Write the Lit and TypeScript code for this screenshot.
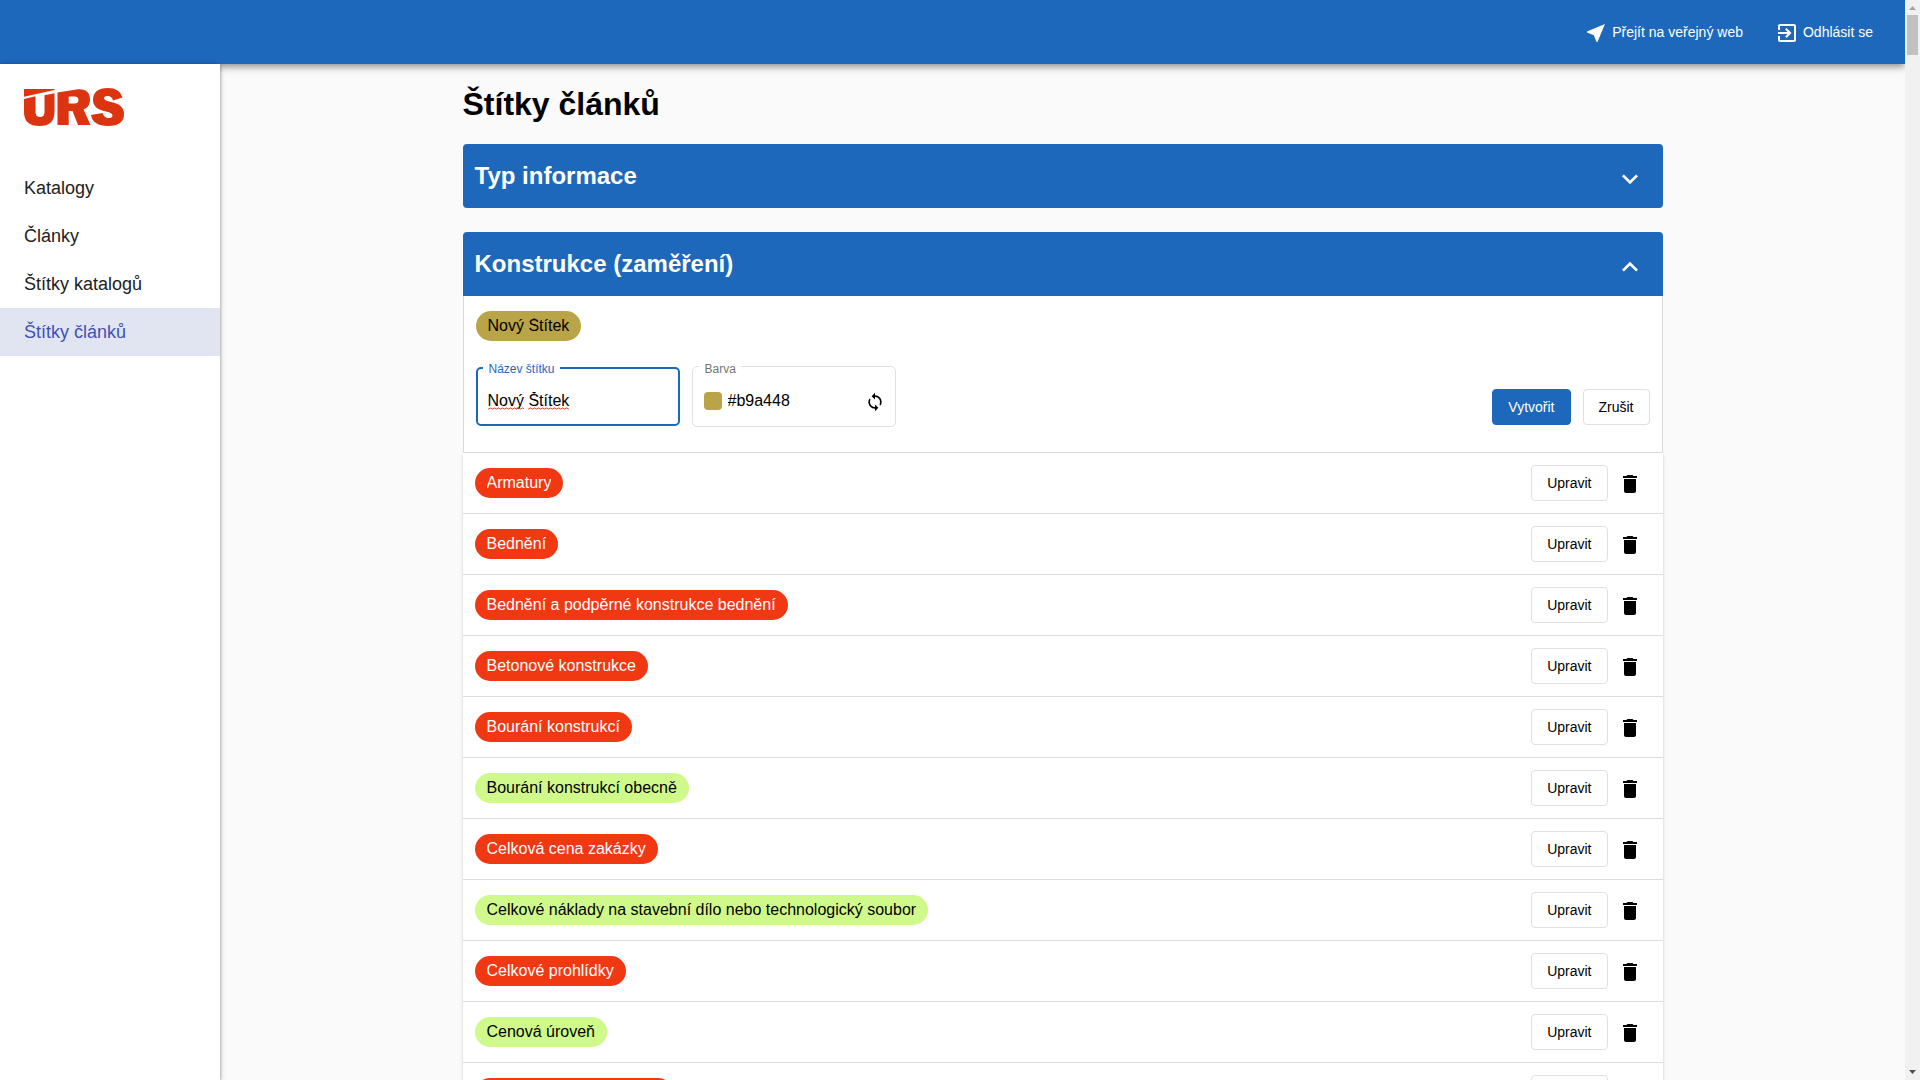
import { LitElement, html, css, svg } from "lit";
import { customElement, property, state } from "lit/decorators.js";
import { classMap } from "lit/directives/class-map.js";
import { styleMap } from "lit/directives/style-map.js";

const ICONS = {
  nearMe: "M21 3L3 10.53v.98l6.84 2.65L12.48 21h.98L21 3z",
  exit: "M10.09 15.59L11.5 17l5-5-5-5-1.41 1.41L12.67 11H3v2h9.67l-2.58 2.59zM19 3H5c-1.11 0-2 .9-2 2v4h2V5h14v14H5v-4H3v4c0 1.1.89 2 2 2h14c1.1 0 2-.9 2-2V5c0-1.1-.9-2-2-2z",
  more: "M16.59 8.59L12 13.17 7.41 8.59 6 10l6 6 6-6z",
  less: "M12 8l-6 6 1.41 1.41L12 10.83l4.59 4.58L18 14z",
  trash: "M6 19c0 1.1.9 2 2 2h8c1.1 0 2-.9 2-2V7H6v12zM19 4h-3.500l-1-1h-5l-1 1H5v2h14V4z",
  sync: "M12 4V1L8 5l4 4V6c3.310 0 6 2.690 6 6 0 1.010-.250 1.970-.700 2.800l1.460 1.460C19.540 15.030 20 13.570 20 12c0-4.420-3.580-8-8-8zm0 14c-3.310 0-6-2.690-6-6 0-1.010.250-1.970.700-2.800L5.240 7.740C4.460 8.970 4 10.430 4 12c0 4.420 3.580 8 8 8v3l4-4-4-4v3z",
};

const icon = (path: string) => svg`<svg class="icon" viewBox="0 0 24 24" aria-hidden="true"><path d=${path}></path></svg>`;

const RED = "#f03813";
const GREEN = "#cffa8b";

interface Tag {
  name: string;
  color: string;
}

const TAGS: Tag[] = [
  { name: "Armatury", color: RED },
  { name: "Bednění", color: RED },
  { name: "Bednění a podpěrné konstrukce bednění", color: RED },
  { name: "Betonové konstrukce", color: RED },
  { name: "Bourání konstrukcí", color: RED },
  { name: "Bourání konstrukcí obecně", color: GREEN },
  { name: "Celková cena zakázky", color: RED },
  { name: "Celkové náklady na stavební dílo nebo technologický soubor", color: GREEN },
  { name: "Celkové prohlídky", color: RED },
  { name: "Cenová úroveň", color: GREEN },
  { name: "Dokončovací konstrukce", color: RED },
];

@customElement("tag-chip")
class TagChip extends LitElement {
  @property() name = "";
  @property() color = RED;

  static styles = css`
    :host { display: inline-flex; min-width: 0; }
    .chip {
      height: 30px;
      padding: 7px 12px 5px;
      border-radius: 15px;
      box-sizing: border-box;
      color: #000;
    }
    .light { color: #fff; }
    .text {
      display: block;
      padding-bottom: 2px;
      font-size: 16px;
      line-height: 16px;
      overflow: hidden;
      white-space: nowrap;
    }
  `;

  render() {
    return html`<span
      class=${classMap({ chip: true, light: this.color === RED })}
      style=${styleMap({ backgroundColor: this.color })}
      ><span class="text">${this.name}</span></span>`;
  }
}

@customElement("app-root")
class AppRoot extends LitElement {
  @state() draftName = "Nový Štítek";
  @state() draftColor = "#b9a448";

  static styles = css`
    :host {
      display: grid;
      grid-template-columns: minmax(0, 1fr) 15px;
      height: 100vh;
      overflow: hidden;
      font-family: "Liberation Sans", Arial, sans-serif;
      color: #000;
      background: #fafafa;
    }
    .app { display: flex; flex-direction: column; min-height: 0; overflow: hidden; }
    .icon { display: block; width: 24px; height: 24px; fill: currentColor; flex: none; }
    button, input { font-family: inherit; margin: 0; }

    .topbar {
      display: flex;
      align-items: center;
      justify-content: flex-end;
      gap: 32px;
      flex: none;
      height: 64px;
      padding: 0 32px;
      box-sizing: border-box;
      background: #1e68bb;
      box-shadow: 0 2px 8px rgba(0, 0, 0, 0.5);
      z-index: 1;
    }
    .toplink {
      display: flex;
      align-items: center;
      gap: 4px;
      padding-top: 2px;
      color: #fff;
      font-size: 14px;
      line-height: 20px;
      text-decoration: none;
    }
    .toplink span { padding-bottom: 2px; }

    .body { display: flex; flex: 1; min-height: 0; }
    .sidebar {
      width: 220px;
      flex: none;
      background: #fff;
      box-shadow: 0 1px 4px rgba(0, 0, 0, 0.5);
      z-index: 2;
    }
    .logo { display: block; width: 100px; height: 38px; margin: 24px 24px 38px; }
    .nav { display: flex; flex-direction: column; }
    .navlink {
      padding: 0 24px;
      font-size: 18px;
      line-height: 48px;
      color: #212121;
      text-decoration: none;
    }
    .navlink.active { color: #3f51b5; background: #e1e5f2; }

    .main { flex: 1; min-width: 0; overflow: hidden; }
    .content { max-width: 1200px; margin: 0 auto; }
    .title { margin: 0; padding: 20px 0; font-size: 32px; line-height: 40px; font-weight: 700; }

    .panel { margin-bottom: 24px; }
    .panelhead {
      display: flex;
      align-items: center;
      justify-content: space-between;
      width: 100%;
      height: 64px;
      padding: 0 17px 0 12px;
      border: 0;
      border-radius: 4px;
      background: #1e68bb;
      color: #fff;
      font-size: 24px;
      font-weight: 700;
      text-align: left;
    }
    .open .panelhead { border-radius: 4px 4px 0 0; }
    .panelhead .icon { width: 32px; height: 32px; margin-top: 6px; }
    .heading { margin: 0; font-size: inherit; }

    .form { padding: 14px 12px 25px; border: 1px solid #d9d9d9; border-top: 0; background: #fff; }
    .formrow { display: flex; align-items: flex-start; gap: 12px; padding-top: 25px; }
    .preview { display: flex; padding-top: 1px; }
    .field {
      position: relative;
      display: flex;
      align-items: center;
      width: 204px;
      height: 61px;
      padding: 8px 10px 0 11px;
      box-sizing: border-box;
      border: 1px solid #e0e0e0;
      border-radius: 5px;
    }
    .field.focused { height: 59px; margin-top: 1px; padding: 9px 10px 0; border: 2px solid #1e68bb; }
    .label {
      position: absolute;
      top: -6px;
      left: 6px;
      padding: 0 5px 0 6px;
      background: #fff;
      color: #757575;
      font-size: 12px;
      line-height: 16px;
    }
    .focused .label { top: -8px; left: 5px; color: #1e68bb; }
    .input {
      flex: 1;
      min-width: 0;
      width: 0;
      height: 18px;
      padding: 0;
      border: 0;
      outline: 0;
      background: transparent;
      color: #000;
      font-size: 16px;
    }
    .squiggle { position: absolute; left: 10px; top: 38px; width: 82px; height: 3px; }
    .swatch { width: 18px; height: 18px; margin-right: 6px; border-radius: 4px; flex: none; }
    .iconbtn { display: flex; padding: 0; border: 0; background: transparent; color: #000; }
    .field .iconbtn { padding-top: 2px; }
    .field .icon { width: 20px; height: 20px; }

    .spacer { flex: 1; }
    .actions { display: flex; gap: 12px; padding-top: 23px; }
    .btn {
      height: 36px;
      padding: 0 15px;
      border: 1px solid #e0e0e0;
      border-radius: 4px;
      background: #fff;
      color: #000;
      font-size: 14px;
    }
    .btn.primary { border-color: #1e68bb; background: #1e68bb; color: #fff; }

    .list { margin: 0; padding: 0; list-style: none; background: #fff; box-shadow: 0 2px 3px rgba(0, 0, 0, 0.2); }
    .row {
      display: flex;
      align-items: center;
      justify-content: space-between;
      height: 60px;
      padding: 0 21px 0 12px;
      border-bottom: 1px solid #dddddd;
    }
    .tools { display: flex; align-items: center; gap: 10px; }
    .tools .iconbtn { padding-top: 2px; }

    .scrollbar { display: flex; flex-direction: column; align-items: center; background: #f1f1f1; }
    .arrow { display: block; width: 15px; height: 15px; flex: none; }
    .thumb { width: 11px; height: 40px; background: #c1c1c1; }
    .track { flex: 1; }
  `;

  private topbar() {
    return html`<header class="topbar">
      <a class="toplink" href="#web">${icon(ICONS.nearMe)}<span>Přejít na veřejný web</span></a>
      <a class="toplink" href="#logout">${icon(ICONS.exit)}<span>Odhlásit se</span></a>
    </header>`;
  }

  private sidebar() {
    const items = ["Katalogy", "Články", "Štítky katalogů", "Štítky článků"];
    return html`<aside class="sidebar">
      <svg class="logo" viewBox="0 0 100 38" role="img" aria-label="ÚRS">
        <g fill="#dc3410">
          <path d="M0 1H30.500V2L0 8.700Z"></path>
          <path d="M0 11L11.500 8.200V24Q11.500 29 16 29Q20.500 29 20.500 24V7.200L30.500 5.300V24Q30.500 38 15.500 38Q0 38 0 24Z"></path>
          <path fill-rule="evenodd" d="M33.500 4.500L54 1.300Q66 0.500 66 12Q66 19 59.500 21.500L66.500 37H54L48.500 23H44.700V37H33.500ZM44.700 8.500V15.500H50.500Q54.500 15.500 54.500 12Q54.500 8.500 50.500 8.500Z"></path>
          <path d="M98.500 9.500L89 12.500Q88 8 83.500 8Q80 8 80 10.300Q80 12.500 86 13.700Q100 16 100 26Q100 38 84 38Q69 38 67 27L78.500 25Q80 30 84.500 30Q88.500 30 88.500 27.500Q88.500 25 82 23.500Q69 21 69 12Q69 0 84 0Q96 0 98.500 9.500Z"></path>
        </g>
      </svg>
      <nav class="nav">
        ${items.map((label, i) => html`<a class=${classMap({ navlink: true, active: i === 3 })} href="#nav-${i}">${label}</a>`)}
      </nav>
    </aside>`;
  }

  private form() {
    return html`<form class="form" @submit=${(e: Event) => e.preventDefault()}>
      <div class="preview"><tag-chip .name=${this.draftName} .color=${this.draftColor}></tag-chip></div>
      <div class="formrow">
        <div class="field focused">
          <label class="label" for="name">Název štítku</label>
          <input class="input" id="name" type="text" spellcheck="false" .value=${this.draftName}
            @input=${(e: Event) => (this.draftName = (e.target as HTMLInputElement).value)} />
          <svg class="squiggle" viewBox="0 0 82 3" aria-hidden="true">
            <defs>
              <pattern id="wave" width="4" height="3" patternUnits="userSpaceOnUse">
                <path d="M0 2L1 2L2 1L3 1L4 2" fill="none" stroke="#f0492e" stroke-width="1"></path>
              </pattern>
            </defs>
            <rect width="36" height="3" fill="url(#wave)"></rect>
            <rect x="40" width="41" height="3" fill="url(#wave)"></rect>
          </svg>
        </div>
        <div class="field">
          <label class="label" for="color">Barva</label>
          <span class="swatch" style=${styleMap({ backgroundColor: this.draftColor })}></span>
          <input class="input" id="color" type="text" spellcheck="false" .value=${this.draftColor}
            @input=${(e: Event) => (this.draftColor = (e.target as HTMLInputElement).value)} />
          <button class="iconbtn" type="button" aria-label="Náhodná barva">${icon(ICONS.sync)}</button>
        </div>
        <div class="spacer"></div>
        <div class="actions">
          <button class="btn primary" type="submit">Vytvořit</button>
          <button class="btn" type="button">Zrušit</button>
        </div>
      </div>
    </form>`;
  }

  render() {
    return html`
      <div class="app">
        ${this.topbar()}
        <div class="body">
          ${this.sidebar()}
          <main class="main">
            <div class="content">
              <h1 class="title">Štítky článků</h1>
              <section class="panel">
                <h2 class="heading">
                  <button class="panelhead" aria-expanded="false"><span>Typ informace</span>${icon(ICONS.more)}</button>
                </h2>
              </section>
              <section class="panel open">
                <h2 class="heading">
                  <button class="panelhead" aria-expanded="true"><span>Konstrukce (zaměření)</span>${icon(ICONS.less)}</button>
                </h2>
                ${this.form()}
                <ul class="list">
                  ${TAGS.map(
                    (tag) => html`<li class="row">
                      <tag-chip .name=${tag.name} .color=${tag.color}></tag-chip>
                      <div class="tools">
                        <button class="btn" type="button">Upravit</button>
                        <button class="iconbtn" type="button" aria-label="Smazat">${icon(ICONS.trash)}</button>
                      </div>
                    </li>`,
                  )}
                </ul>
              </section>
            </div>
          </main>
        </div>
      </div>
      <div class="scrollbar" aria-hidden="true">
        <svg class="arrow" viewBox="0 0 15 15"><path d="M4 10L7.500 6L11 10Z" fill="#a3a3a3"></path></svg>
        <div class="thumb"></div>
        <div class="track"></div>
        <svg class="arrow" viewBox="0 0 15 15"><path d="M4 5L7.500 9L11 5Z" fill="#505050"></path></svg>
      </div>
    `;
  }
}
